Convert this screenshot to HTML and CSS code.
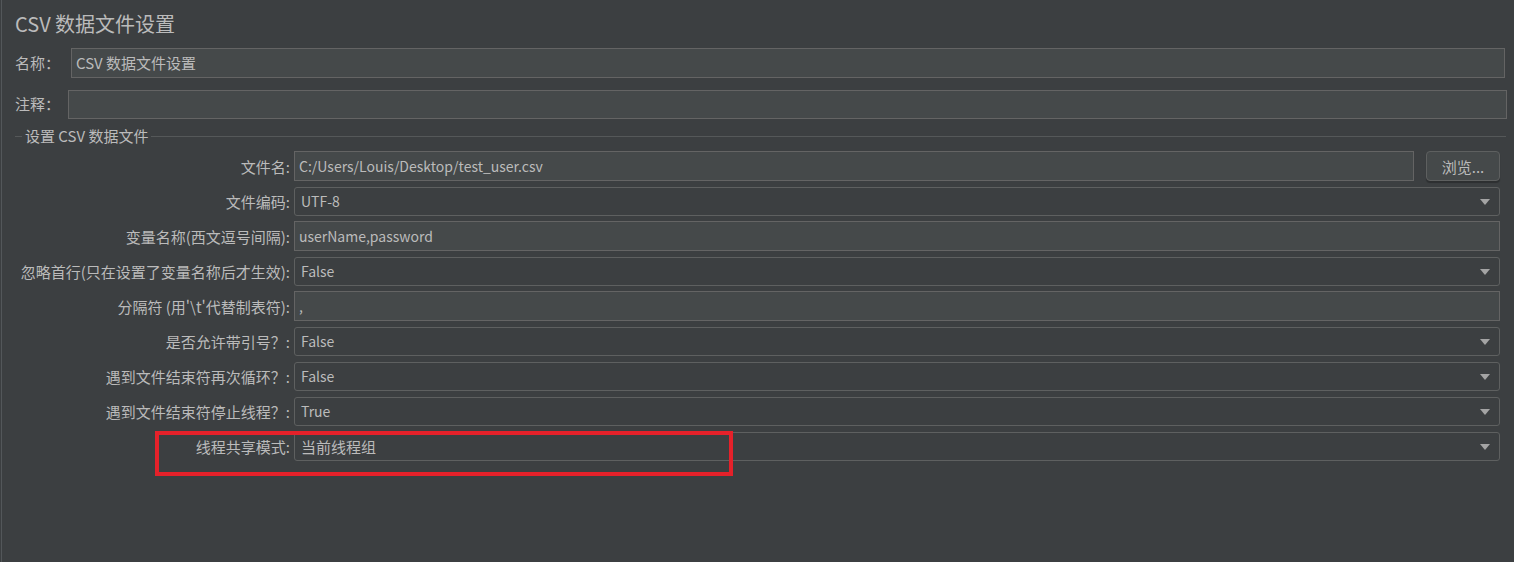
FILE: index.html
```html
<!DOCTYPE html>
<html lang="zh">
<head>
<meta charset="utf-8">
<link rel="stylesheet" href="styles.css">
</head>
<body>
<div class="page">
  <h1 class="title">CSV 数据文件设置</h1>
  <div class="top-row name-row">
    <span class="top-label">名称：</span>
    <div class="tf name-field cjk">CSV 数据文件设置</div>
  </div>
  <div class="top-row comment-row">
    <span class="top-label">注释：</span>
    <div class="tf comment-field"></div>
  </div>
  <div class="group">
    <div class="legend"><span class="legend-line short"></span><span class="legend-text">设置 CSV 数据文件</span><span class="legend-line long"></span></div>
    <div class="rows">
      <div class="row">
        <label class="lbl">文件名:</label>
        <div class="tf grow">C:/Users/Louis/Desktop/test_user.csv</div>
        <button class="btn">浏览...</button>
      </div>
      <div class="row">
        <label class="lbl">文件编码:</label>
        <div class="combo">UTF-8<span class="arrow"></span></div>
      </div>
      <div class="row">
        <label class="lbl">变量名称(西文逗号间隔):</label>
        <div class="tf grow">userName,password</div>
      </div>
      <div class="row">
        <label class="lbl">忽略首行(只在设置了变量名称后才生效):</label>
        <div class="combo">False<span class="arrow"></span></div>
      </div>
      <div class="row">
        <label class="lbl">分隔符 (用'\t'代替制表符):</label>
        <div class="tf grow">,</div>
      </div>
      <div class="row">
        <label class="lbl">是否允许带引号？:</label>
        <div class="combo">False<span class="arrow"></span></div>
      </div>
      <div class="row">
        <label class="lbl">遇到文件结束符再次循环？:</label>
        <div class="combo">False<span class="arrow"></span></div>
      </div>
      <div class="row">
        <label class="lbl">遇到文件结束符停止线程？:</label>
        <div class="combo">True<span class="arrow"></span></div>
      </div>
      <div class="row marked">
        <label class="lbl">线程共享模式:</label>
        <div class="combo cjk">当前线程组<span class="arrow"></span></div>
        <div class="highlight"></div>
      </div>
    </div>
  </div>
</div>
</body>
</html>
```

FILE: styles.css
```css
html, body {
  margin: 0;
  padding: 0;
  background: #3c3f41;
}
body {
  font-family: "Noto Sans CJK SC", "Noto Sans", "Liberation Sans", sans-serif;
  color: #bbbbbb;
  font-size: 15px;
  width: 1514px;
  height: 562px;
  overflow: hidden;
}
.page {
  height: 562px;
  box-sizing: border-box;
  border-left: 1px solid #53575a;
  margin-left: 1px;
  padding: 8px 0 0 13px;
}
.title {
  margin: 0;
  font-size: 20px;
  font-weight: normal;
  line-height: 32px;
  height: 32px;
  color: #bbbbbb;
}
.top-row {
  display: flex;
  align-items: center;
}
.top-label {
  width: 56px;
  flex: none;
  line-height: 30px;
}
.name-row {
  margin-top: 8px;
}
.name-row .name-field {
  width: 1434px;
}
.comment-row {
  margin-top: 11px;
}
.comment-row .top-label {
  width: 53px;
}
.comment-row .comment-field {
  width: 1439px;
  height: 29px;
}
.tf {
  box-sizing: border-box;
  height: 30px;
  line-height: 28px;
  background: #45494a;
  border: 1px solid #646464;
  padding: 0 4px;
  white-space: nowrap;
  font-size: 14px;
}
.cjk {
  font-size: 15px;
}
.grow {
  flex: 1;
}
.group {
  margin-top: 7px;
  width: 1491px;
}
.legend {
  display: flex;
  align-items: center;
  height: 20px;
}
.legend-line {
  height: 1px;
  background: #555859;
}
.legend-line.short {
  width: 7px;
}
.legend-line.long {
  flex: 1;
}
.legend-text {
  padding: 0 3px 0 3px;
  line-height: 20px;
}
.rows {
  margin-top: 5px;
  width: 1485px;
  display: flex;
  flex-direction: column;
  gap: 5px;
}
.row {
  display: flex;
  align-items: center;
  height: 30px;
}
.lbl {
  width: 279px;
  flex: none;
  text-align: right;
  padding-right: 4px;
  box-sizing: border-box;
  white-space: nowrap;
}
.btn {
  margin-left: 12px;
  width: 74px;
  height: 30px;
  box-sizing: border-box;
  background: #45494a;
  border: 1px solid #5e6060;
  border-radius: 4px;
  color: #bbbbbb;
  font-family: inherit;
  font-size: 15px;
  padding: 0;
  box-shadow: 0 2px 1px rgba(0, 0, 0, 0.25);
}
.combo {
  flex: 1;
  position: relative;
  box-sizing: border-box;
  height: 29px;
  line-height: 27px;
  border: 1px solid #5e6060;
  border-radius: 3px;
  background: #3c3f41;
  padding: 0 6px;
  font-size: 14px;
}
.combo.cjk {
  font-size: 15px;
}
.arrow {
  position: absolute;
  right: 9px;
  top: 11px;
  width: 0;
  height: 0;
  border-left: 5px solid transparent;
  border-right: 5px solid transparent;
  border-top: 6px solid #a4a4a4;
}
.marked {
  position: relative;
}
.highlight {
  position: absolute;
  left: 140px;
  top: 0;
  width: 578px;
  height: 45px;
  box-sizing: border-box;
  border: 4px solid #e5212a;
}
```
